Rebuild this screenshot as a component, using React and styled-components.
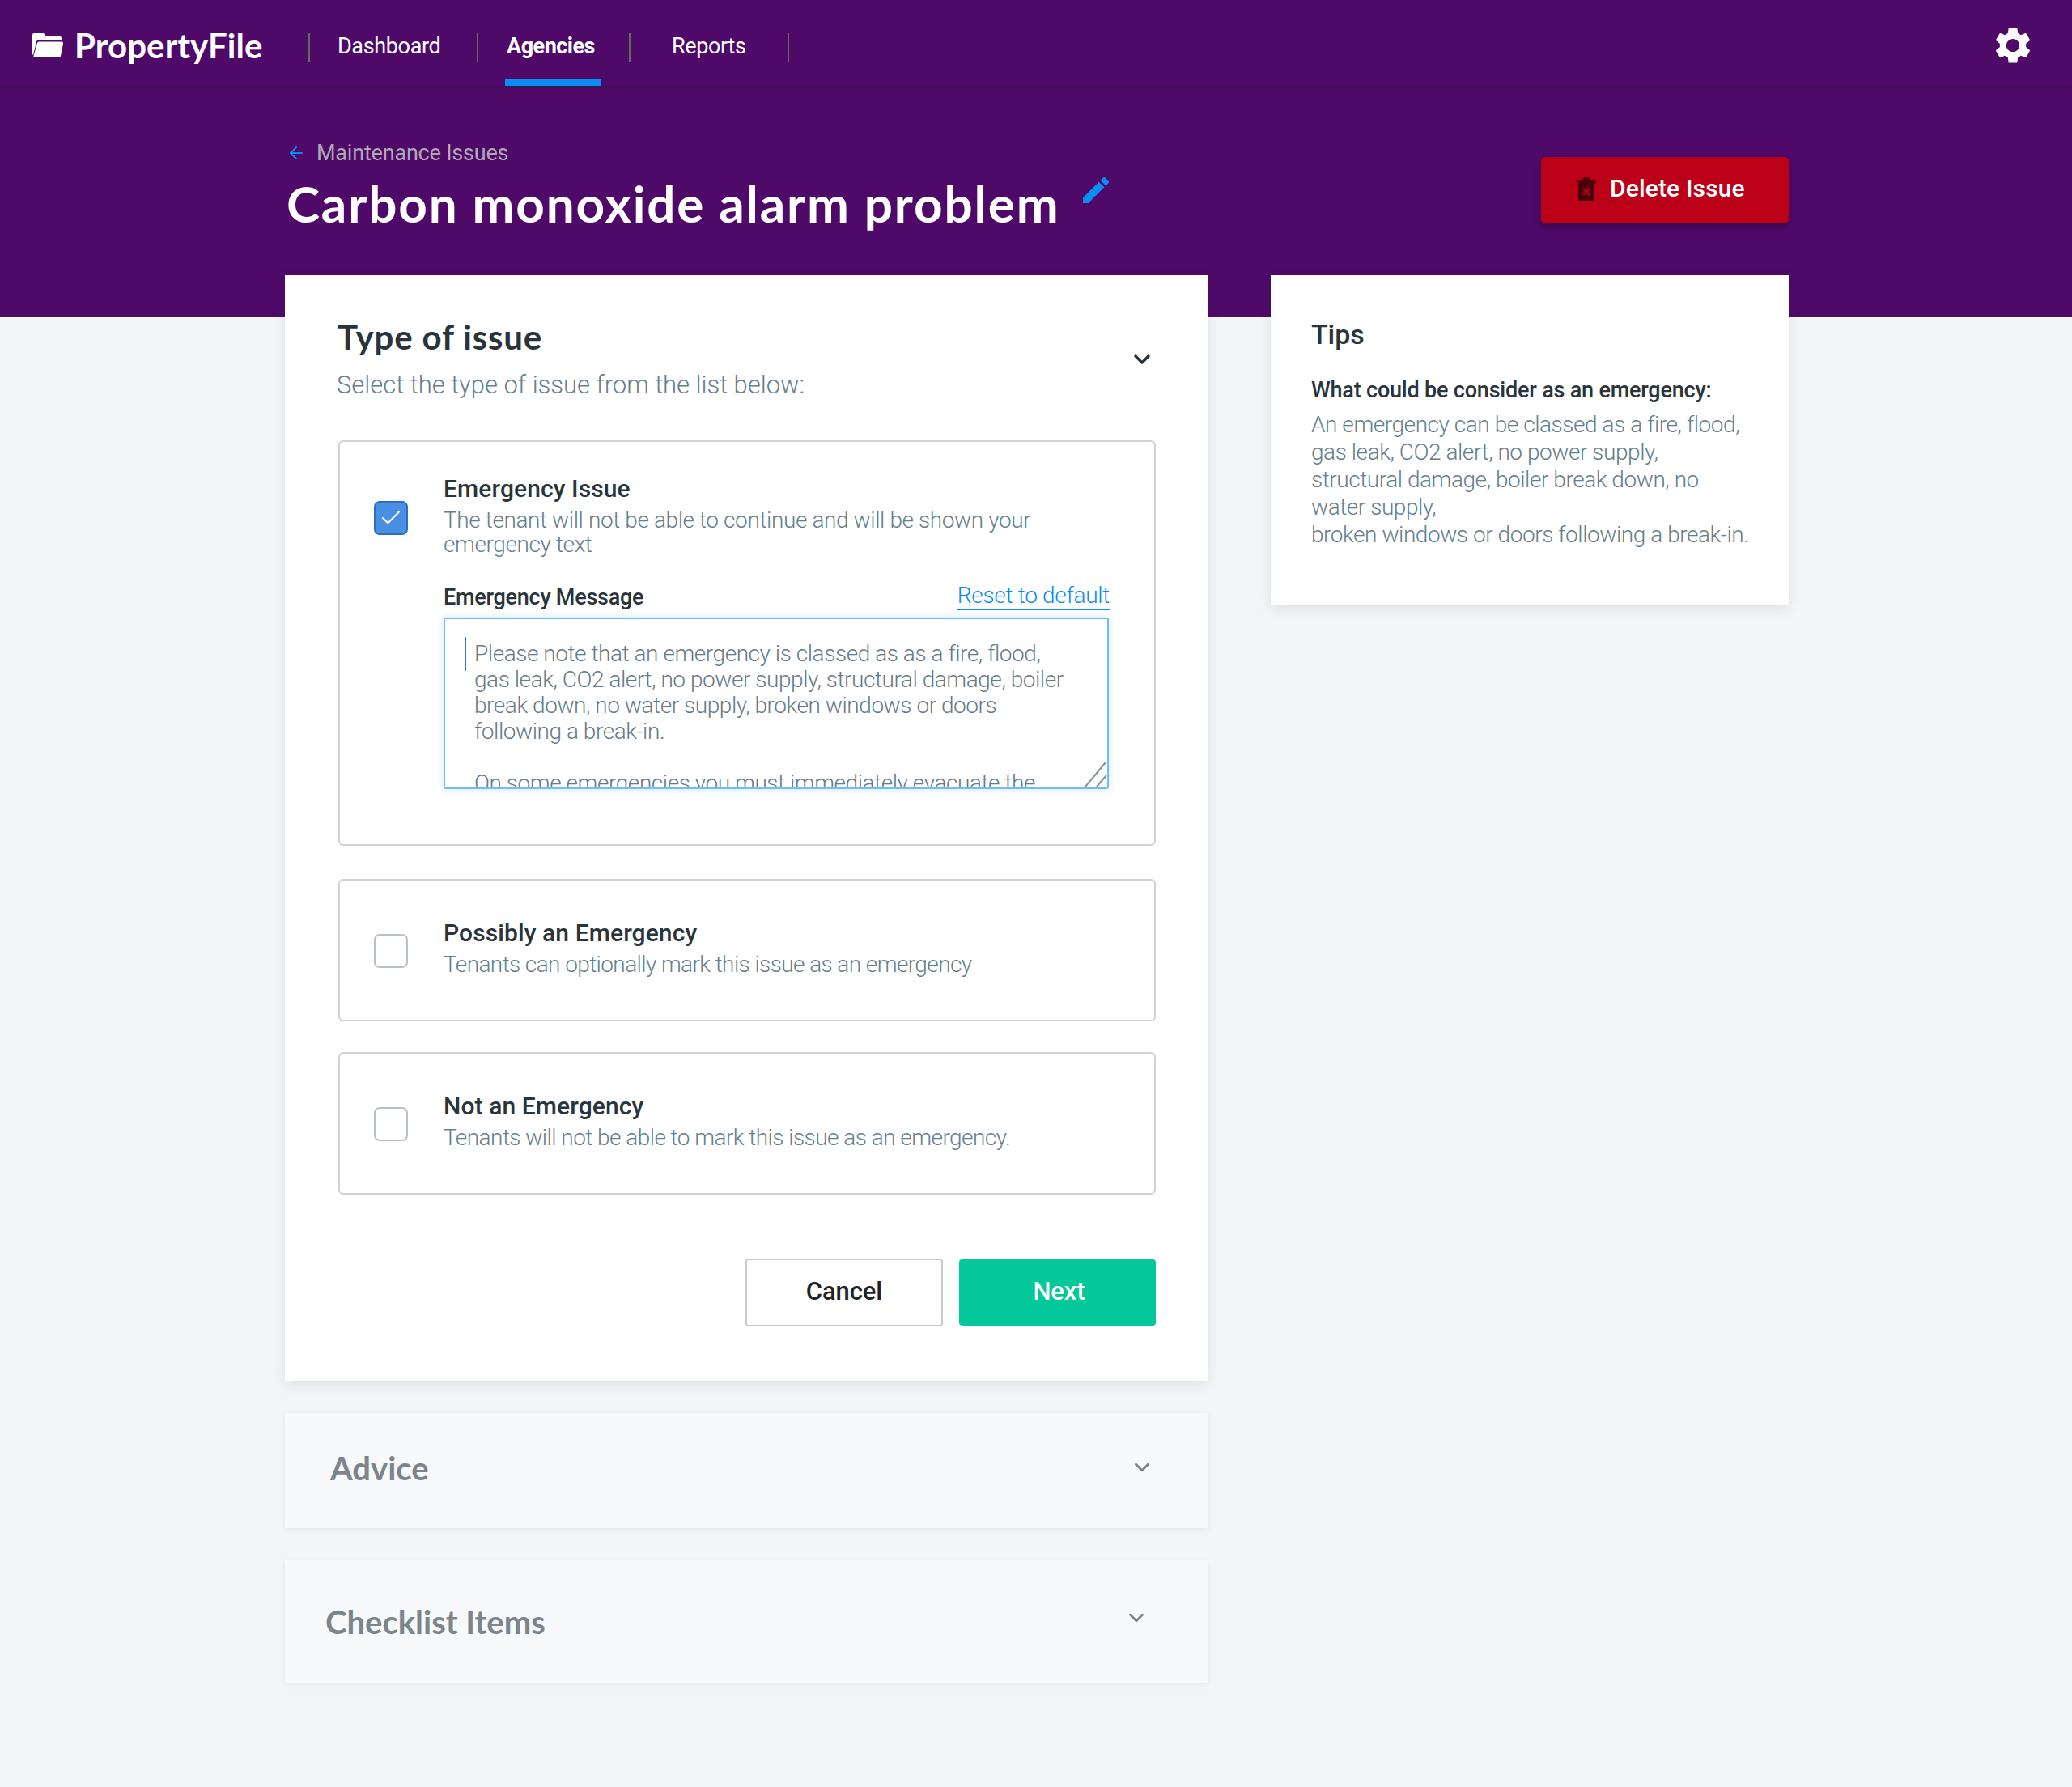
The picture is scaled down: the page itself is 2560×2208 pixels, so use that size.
import React from "react";
import styled, { createGlobalStyle } from "styled-components";
import { ChevronDown, ArrowLeft, Check } from "lucide-react";

const Global = createGlobalStyle`
  html, body { margin: 0; padding: 0; background: #f3f5f7; }
  * { box-sizing: border-box; }
  body { font-family: Roboto, "Noto Sans", sans-serif; }
`;
const Page = styled.div`width: 2560px; height: 2208px; background: #f3f5f7; overflow: hidden;`;
const TopBar = styled.header`
  height: 109px; background: #4f0969; border-bottom: 3px solid #3b1350;
  display: flex; align-items: stretch; padding: 0 46px 0 40px; position: relative;
`;
const Logo = styled.div`display: flex; align-items: center; gap: 14px; width: 341px; height: 106px; color: #fff;
  font-family: Lato, sans-serif; font-weight: 700; font-size: 42px; letter-spacing: 0.1px; padding-top: 6px;`;
const Nav = styled.nav`display: flex; align-items: stretch; height: 106px;`;
const NavItem = styled.a`
  position: relative; display: flex; align-items: center; padding: 8px 0 0 ${p => p.$pl}px; width: ${p => p.$w}px;
  color: #fff; font-size: 27px; letter-spacing: ${p => p.$active ? -0.5 : -0.35}px; font-weight: ${p => p.$active ? 700 : 400};
  &::before { content: ""; position: absolute; left: 0; top: 41px; height: 36px; width: 2px; background: #5f6d57; }
  ${p => p.$last && `&::after { content: ""; position: absolute; right: 0; top: 41px; height: 36px; width: 2px; background: #5f6d57; }`}
`;
const Underline = styled.span`position: absolute; left: 35px; right: 35px; bottom: 0; height: 8px; background: #0b8cf5;`;
const Spacer = styled.div`flex: 1;`;
const Gear = styled.div`display: flex; align-items: center; color: #fff; padding-top: 6px;`;
const Hero = styled.section`
  height: 283px; background: #4f0969; padding: 62px 350px 0 354px; display: flex; justify-content: space-between; align-items: flex-start;
`;
const HeroLeft = styled.div`display: flex; flex-direction: column;`;
const Back = styled.a`display: flex; align-items: center; gap: 13px; color: #b0a9b4; font-size: 27px; letter-spacing: -0.2px; line-height: 36px; svg { color: #0b8cf5; }`;
const TitleRow = styled.div`display: flex; align-items: flex-start; gap: 29px; margin-top: 4px;`;
const Title = styled.h1`margin: 0; color: #fff; font-family: Lato, sans-serif; font-weight: 700; font-size: 62px; line-height: 80px; letter-spacing: 1.85px;`;
const Pen = styled.span`color: #0b8cf5; display: block; margin-top: 8px;`;
const DeleteBtn = styled.button`
  width: 306px; height: 82px; margin-top: 23px; border: 0; border-radius: 5px; background: #bc0018; color: #fff;
  box-shadow: 0 4px 8px rgba(0,0,0,.3); display: flex; align-items: center; gap: 17px; padding: 0 0 5px 44px;
  font-family: inherit; font-size: 30px; font-weight: 500; letter-spacing: 0.15px;
`;
const Content = styled.main`display: flex; align-items: flex-start; gap: 78px; margin: -52px 350px 0 352px;`;
const Left = styled.div`width: 1140px; display: flex; flex-direction: column; gap: 40px;`;
const Card = styled.section`background: #fff; height: 1366px; padding: 51px 64px 0 65px; box-shadow: 0 4px 16px rgba(40,50,60,.10);`;
const CardHead = styled.div`display: flex; justify-content: space-between; align-items: center; padding-right: 1px;`;
const CardTitle = styled.h2`margin: 0; color: #29343b; font-family: Lato, sans-serif; font-weight: 700; font-size: 42px; line-height: 50px; letter-spacing: .85px;`;
const CardSub = styled.p`margin: 14px 0 0 -1px; color: #64808d; font-size: 31px; font-weight: 300; line-height: 42px; letter-spacing: -0.03px;`;
const Options = styled.div`display: flex; flex-direction: column; margin: 47px 0 0 1px;`;
const Option = styled.div`
  border: 2px solid #cfd3d6; border-radius: 6px; height: ${p => p.$h}px; margin-bottom: ${p => p.$mb}px;
  padding: ${p => p.$pt}px 55px 0 42px; display: grid; grid-template-columns: 44px 1fr; column-gap: 42px; align-items: start;
`;
const Box = styled.span`
  width: 42px; height: 42px; border-radius: 7px; margin-top: ${p => p.$mt}px; display: flex; align-items: center; justify-content: center;
  background: ${p => p.$on ? "#4a90e2" : "#fff"}; border: 2px solid ${p => p.$on ? "#2a6fc4" : "#b9c0c5"}; color: #fff;
`;
const OptTitle = styled.div`color: #29343b; font-size: 30px; line-height: 40px; font-weight: 500; letter-spacing: 0.1px;`;
const OptDesc = styled.div`color: #64808d; font-size: 28px; font-weight: 300; line-height: 30px; letter-spacing: ${p => p.$ls}px; margin-top: 4px;`;
const MsgHead = styled.div`display: flex; justify-content: space-between; align-items: flex-end; margin-top: 30px; height: 36px;`;
const MsgLabel = styled.span`color: #29343b; font-size: 27px; font-weight: 500; letter-spacing: -0.25px;`;
const Reset = styled.a`color: #0b8cf5; font-size: 28px; font-weight: 300; letter-spacing: -0.3px; border-bottom: 2px solid #0b8cf5; line-height: 32px;`;
const AreaWrap = styled.div`position: relative; margin-top: 9px;`;
const Area = styled.textarea`
  display: block; width: 822px; height: 212px; padding: 27px 46px 0 36px; resize: none; overflow: hidden; outline: 0;
  border: 2px solid #6ebdff; border-radius: 3px; box-shadow: 0 0 8px rgba(110,189,255,.35);
  color: #667b87; font-family: inherit; font-size: 28px; font-weight: 300; line-height: 32px; letter-spacing: -0.45px; background: #fff;
`;
const Caret = styled.span`position: absolute; left: 26px; top: 24px; width: 2px; height: 42px; background: #2a7fd8;`;
const Grip = styled.svg`position: absolute; right: 2px; bottom: 2px;`;
const Actions = styled.div`display: flex; justify-content: flex-end; align-items: flex-start; gap: 20px; margin-top: 79px;`;
const Btn = styled.button`
  width: ${p => p.$w}px; height: ${p => p.$primary ? 82 : 84}px; margin-top: ${p => p.$primary ? 1 : 0}px; border-radius: 4px; font-family: inherit; font-size: 31px; font-weight: 500; letter-spacing: -0.1px;
  background: ${p => p.$primary ? "#04c89a" : "#fff"}; color: ${p => p.$primary ? "#fff" : "#1d2327"};
  border: ${p => p.$primary ? "0" : "2px solid #c5cbd0"}; padding: 0 0 4px ${p => p.$primary ? 4 : 0}px;
`;
const Collapsed = styled.section`
  background: #f8f9fb; height: ${p => p.$h}px; box-shadow: 0 2px 8px rgba(40,50,60,.08); padding: 0 ${p => p.$pr}px 0 ${p => p.$pl}px;
  display: flex; justify-content: space-between; align-items: center; color: #7c858b;
`;
const CollapsedTitle = styled.h3`margin: 0 0 ${p => p.$mb}px; font-family: Lato, sans-serif; font-weight: 700; font-size: 40px; letter-spacing: 0;`;
const Chevron = styled.span`display: block; color: ${p => p.$c}; margin-top: ${p => p.$mt}px;`;
const Tips = styled.aside`width: 640px; height: 408px; background: #fff; padding: 52px 20px 0 50px; box-shadow: 0 4px 16px rgba(40,50,60,.10);`;
const TipsTitle = styled.h4`margin: 0; color: #29343b; font-size: 34px; line-height: 42px; font-weight: 500; letter-spacing: -0.1px;`;
const TipsLabel = styled.div`color: #29343b; font-size: 27px; line-height: 36px; font-weight: 500; letter-spacing: -0.2px; margin-top: 30px;`;
const TipsBody = styled.p`margin: 8px 0 0; color: #64808d; font-size: 28px; font-weight: 300; line-height: 34px; letter-spacing: -0.45px; white-space: pre-line;`;

const Trash = () => (
  <svg width="24" height="30" viewBox="0 0 24 30">
    <rect x="0" y="4" width="24" height="4" fill="#4a0008" />
    <rect x="8" y="1" width="8" height="4" rx="1" fill="#4a0008" />
    <rect x="2" y="8" width="20" height="22" rx="2" fill="#4a0008" />
    <path d="M8 15l8 8M16 15l-8 8" stroke="#bc0018" strokeWidth="2.4" />
  </svg>
);
const Folder = () => (
  <svg width="38" height="30" viewBox="0 0 38 30" fill="#fff">
    <path d="M2 0h12l3 4h17a2 2 0 0 1 2 2v2H8a3 3 0 0 0-3 2.4L1 27 0 26V2a2 2 0 0 1 2-2z" />
    <path d="M8 10.500h28a2 2 0 0 1 2 2.500l-3 15a2 2 0 0 1-2 2H3a1.500 1.500 0 0 1-1.500-2l4.500-16a2 2 0 0 1 2-1.500z" />
  </svg>
);
const GearIcon = () => (
  <svg width="54" height="54" viewBox="0 0 24 24" fill="currentColor">
    <path d="M19.14 12.94c.04-.3.06-.61.06-.94 0-.32-.02-.64-.07-.94l2.03-1.58a.49.49 0 0 0 .12-.61l-1.92-3.32a.488.488 0 0 0-.59-.22l-2.39.96c-.5-.38-1.03-.7-1.62-.94l-.36-2.54a.484.484 0 0 0-.48-.41h-3.84c-.24 0-.43.17-.47.41l-.36 2.54c-.59.24-1.13.57-1.62.94l-2.39-.96c-.22-.08-.47 0-.59.22L2.74 8.87c-.12.21-.08.47.12.61l2.03 1.58c-.05.3-.09.63-.09.94s.02.64.07.94l-2.03 1.58a.49.49 0 0 0-.12.61l1.92 3.32c.12.22.37.29.59.22l2.39-.96c.5.38 1.03.7 1.62.94l.36 2.54c.05.24.24.41.48.41h3.84c.24 0 .44-.17.47-.41l.36-2.54c.59-.24 1.13-.56 1.62-.94l2.39.96c.22.08.47 0 .59-.22l1.92-3.32c.12-.22.07-.47-.12-.61l-2.01-1.58zM12 15.600c-1.980 0-3.600-1.620-3.600-3.600s1.620-3.600 3.600-3.600 3.600 1.620 3.600 3.600-1.620 3.600-3.600 3.600z" />
  </svg>
);
const PenIcon = () => (
  <svg width="32" height="32" viewBox="3 3 18 18" fill="currentColor">
    <path d="M3 17.250V21h3.750L17.810 9.940l-3.750-3.750L3 17.250zM20.710 7.040a1 1 0 0 0 0-1.410l-2.340-2.340a1 1 0 0 0-1.410 0l-1.830 1.830 3.750 3.750 1.830-1.830z" />
  </svg>
);

const message = `Please note that an emergency is classed as as a fire, flood, gas leak, CO2 alert, no power supply, structural damage, boiler break down, no water supply, broken windows or doors following a break-in.

On some emergencies you must immediately evacuate the property and call the emergency services.`;

export default function App() {
  return (
    <Page>
      <Global />
      <TopBar>
        <Logo><Folder />PropertyFile</Logo>
        <Nav>
          <NavItem $w={208} $pl={36}>Dashboard</NavItem>
          <NavItem $w={188} $pl={37} $active>Agencies<Underline /></NavItem>
          <NavItem $w={198} $pl={53} $last>Reports</NavItem>
        </Nav>
        <Spacer />
        <Gear><GearIcon /></Gear>
      </TopBar>
      <Hero>
        <HeroLeft>
          <Back><ArrowLeft size={24} strokeWidth={2} />Maintenance Issues</Back>
          <TitleRow>
            <Title>Carbon monoxide alarm problem</Title>
            <Pen><PenIcon /></Pen>
          </TitleRow>
        </HeroLeft>
        <DeleteBtn><Trash />Delete Issue</DeleteBtn>
      </Hero>
      <Content>
        <Left>
          <Card>
            <CardHead>
              <div>
                <CardTitle>Type of issue</CardTitle>
                <CardSub>Select the type of issue from the list below:</CardSub>
              </div>
              <Chevron $c="#29343b" $mt={4}><ChevronDown size={32} strokeWidth={2.6} /></Chevron>
            </CardHead>
            <Options>
              <Option $h={501} $mb={41} $pt={38}>
                <Box $on $mt={35}><Check size={30} strokeWidth={1.6} /></Box>
                <div>
                  <OptTitle>Emergency Issue</OptTitle>
                  <OptDesc $ls={-0.4}>The tenant will not be able to continue and will be shown your emergency text</OptDesc>
                  <MsgHead>
                    <MsgLabel>Emergency Message</MsgLabel>
                    <Reset>Reset to default</Reset>
                  </MsgHead>
                  <AreaWrap>
                    <Area readOnly value={message} />
                    <Caret />
                    <Grip width="30" height="32" viewBox="0 0 30 32" fill="none" stroke="#8a8f93" strokeWidth="2">
                      <path d="M2 31 L27 1 M16 31 L28 17" />
                    </Grip>
                  </AreaWrap>
                </div>
              </Option>
              <Option $h={176} $mb={38} $pt={45}>
                <Box $mt={21} />
                <div>
                  <OptTitle>Possibly an Emergency</OptTitle>
                  <OptDesc $ls={-0.6}>Tenants can optionally mark this issue as an emergency</OptDesc>
                </div>
              </Option>
              <Option $h={176} $mb={0} $pt={45}>
                <Box $mt={21} />
                <div>
                  <OptTitle>Not an Emergency</OptTitle>
                  <OptDesc $ls={-0.55}>Tenants will not be able to mark this issue as an emergency.</OptDesc>
                </div>
              </Option>
            </Options>
            <Actions>
              <Btn $w={244}>Cancel</Btn>
              <Btn $w={243} $primary>Next</Btn>
            </Actions>
          </Card>
          <Collapsed $h={142} $pl={56} $pr={66} >
            <CollapsedTitle $mb={6}>Advice</CollapsedTitle>
            <Chevron $c="#7c858b" $mt={-4}><ChevronDown size={30} strokeWidth={2.4} /></Chevron>
          </Collapsed>
          <Collapsed $h={151} $pl={50} $pr={73}>
            <CollapsedTitle $mb={0}>Checklist Items</CollapsedTitle>
            <Chevron $c="#7c858b" $mt={-5}><ChevronDown size={30} strokeWidth={2.4} /></Chevron>
          </Collapsed>
        </Left>
        <Tips>
          <TipsTitle>Tips</TipsTitle>
          <TipsLabel>What could be consider as an emergency:</TipsLabel>
          <TipsBody>{"An emergency can be classed as a fire, flood,\ngas leak, CO2 alert, no power supply,\nstructural damage, boiler break down, no\nwater supply,\nbroken windows or doors following a break-in."}</TipsBody>
        </Tips>
      </Content>
    </Page>
  );
}
